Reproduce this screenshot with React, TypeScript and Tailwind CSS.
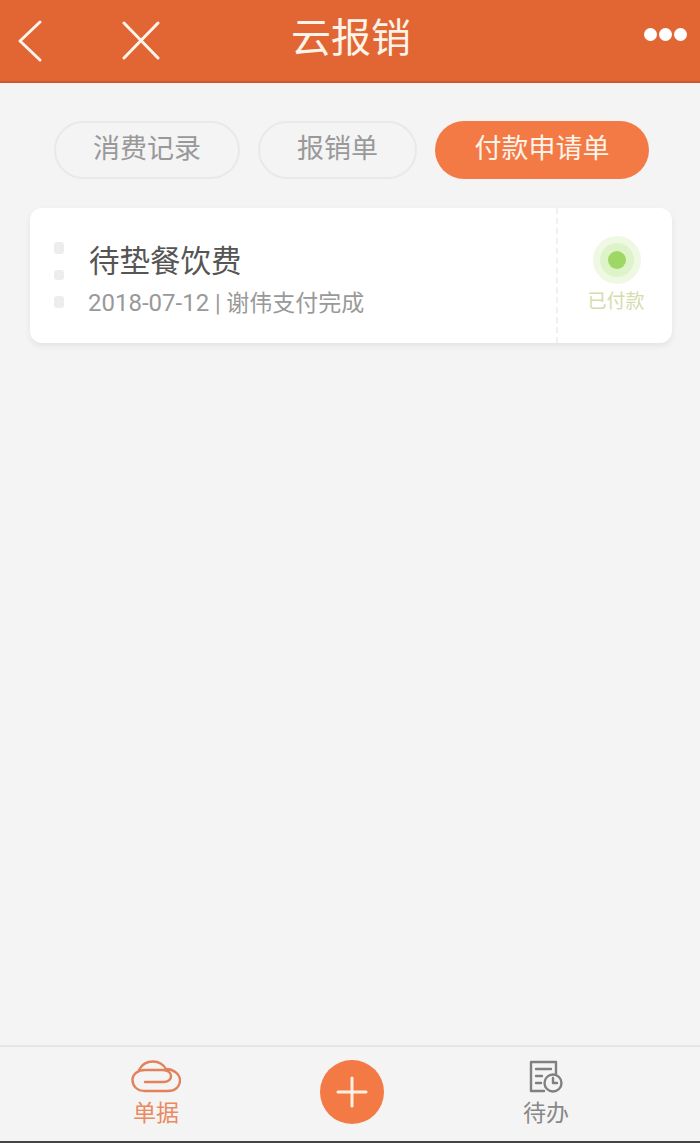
export default function App() {
  return (
    <div className="w-[700px] h-[1143px] flex flex-col bg-[#f4f4f5] overflow-hidden font-['Roboto','Noto_Sans_CJK_SC',sans-serif]">
      <header className="h-[83px] shrink-0 bg-[#e26634] border-b-2 border-[#c9592c] flex items-center text-white">
        <div className="w-[60px] flex justify-center">
          <svg width="26" height="44" viewBox="0 0 26 44" fill="none" stroke="#fff5ec" strokeWidth="3" strokeLinecap="round" strokeLinejoin="round">
            <path d="M23 3 L3 22 L23 41" />
          </svg>
        </div>
        <div className="ml-[61px] w-[40px] flex justify-center">
          <svg width="40" height="40" viewBox="0 0 40 40" fill="none" stroke="#fff5ec" strokeWidth="3" strokeLinecap="round">
            <path d="M3 2 L37 37 M37 2 L3 37" />
          </svg>
        </div>
        <div className="ml-[130px] w-[120px] text-[40px] leading-[48px] text-center text-[#fdf3e9] whitespace-nowrap pb-[4px]">云报销</div>
        <div className="ml-auto mr-[13px] flex gap-[2px] pb-[12px]">
          <span className="w-[13px] h-[13px] rounded-full bg-white" />
          <span className="w-[13px] h-[13px] rounded-full bg-white" />
          <span className="w-[13px] h-[13px] rounded-full bg-white" />
        </div>
      </header>

      <nav className="flex pl-[54px] pt-[38px] gap-[18px] text-[27px] leading-[36px]">
        <div className="w-[186px] h-[58px] rounded-full border-2 border-[#e9e9e9] flex items-center justify-center text-[#999] pb-[3px]">消费记录</div>
        <div className="w-[159px] h-[58px] rounded-full border-2 border-[#e9e9e9] flex items-center justify-center text-[#999] pb-[3px]">报销单</div>
        <div className="w-[214px] h-[58px] rounded-full bg-[#f47a45] flex items-center justify-center text-[#fdf3e9] pb-[3px]">付款申请单</div>
      </nav>

      <section className="mx-[30px] w-[642px] mt-[29px] h-[135px] rounded-[12px] bg-white shadow-[0_3px_6px_rgba(0,0,0,0.07)] flex">
        <div className="w-[58px] flex flex-col items-start pl-[24px] pt-[34px] gap-[16px]">
          <span className="w-[10px] h-[12px] rounded-[3px] bg-[#ededed]" />
          <span className="w-[10px] h-[10px] rounded-[3px] bg-[#ededed]" />
          <span className="w-[10px] h-[12px] rounded-[3px] bg-[#ededed]" />
        </div>
        <div className="flex-1 pt-[32px]">
          <div className="text-[30.5px] leading-[44px] text-[#555] whitespace-nowrap pl-[1px]">待垫餐饮费</div>
          <div className="text-[23px] leading-[32px] mt-[3px] text-[#999] whitespace-nowrap"><span className="text-[24px]">2018-07-12</span> | 谢伟支付完成</div>
        </div>
        <div className="w-[116px] border-l-2 border-dashed border-[#f0f0f0] flex flex-col items-center pt-[28px] pl-[4px]">
          <div className="w-[48px] h-[48px] rounded-full bg-[#eef8e2] flex items-center justify-center">
            <div className="w-[34px] h-[34px] rounded-full bg-[#ddf3c8] flex items-center justify-center">
              <div className="w-[18px] h-[18px] rounded-full bg-[#9ed765]" />
            </div>
          </div>
          <div className="text-[19px] leading-[28px] mt-[4px] text-[#d5dcae] whitespace-nowrap mr-[2px]">已付款</div>
        </div>
      </section>

      <div className="flex-1" />

      <footer className="h-[98px] shrink-0 border-t-2 border-[#e6e6e6] flex items-start border-b-2 border-b-[#444]">
        <div className="ml-[126px] w-[60px] flex flex-col items-center pt-[13px]">
          <svg width="50" height="33" viewBox="0 0 50 33" fill="none" stroke="#e2815a" strokeWidth="2.4" strokeLinecap="round" strokeLinejoin="round">
            <path d="M8 10 C11 4 16 1.500 22 1.500 C28 1.500 33 5 35 9 C42 9 49 14 49 20 C49 27 44 31 37 31 H14 C6 31 1.500 26 1.500 20 C1.500 14 7 10 14 10 H32 C37 10 40 13 40 16 C40 20 37 22 32 22 H14" />
          </svg>
          <div className="text-[23px] leading-[32px] mt-[5px] text-[#ea8a60] whitespace-nowrap">单据</div>
        </div>
        <div className="ml-[134px] mt-[13px] w-[64px] h-[64px] rounded-full bg-[#f47a45] flex items-center justify-center">
          <svg width="32" height="32" viewBox="0 0 32 32" fill="none" stroke="#fdf0e4" strokeWidth="3" strokeLinecap="round">
            <path d="M16 2 V30 M2 16 H30" />
          </svg>
        </div>
        <div className="ml-[132px] w-[60px] flex flex-col items-center pt-[13px]">
          <svg width="34" height="34" viewBox="0 0 34 34" fill="none" stroke="#808080" strokeWidth="2.4" strokeLinecap="round" strokeLinejoin="round">
            <path d="M15 31 H2 V2 H27 V14" />
            <path d="M7 9 H22 M7 16 H13 M7 23 H12" />
            <circle cx="24" cy="23" r="8.500" />
            <path d="M24 18 V23 H28" />
          </svg>
          <div className="text-[23px] leading-[32px] mt-[4px] text-[#888] whitespace-nowrap">待办</div>
        </div>
      </footer>
    </div>
  );
}
